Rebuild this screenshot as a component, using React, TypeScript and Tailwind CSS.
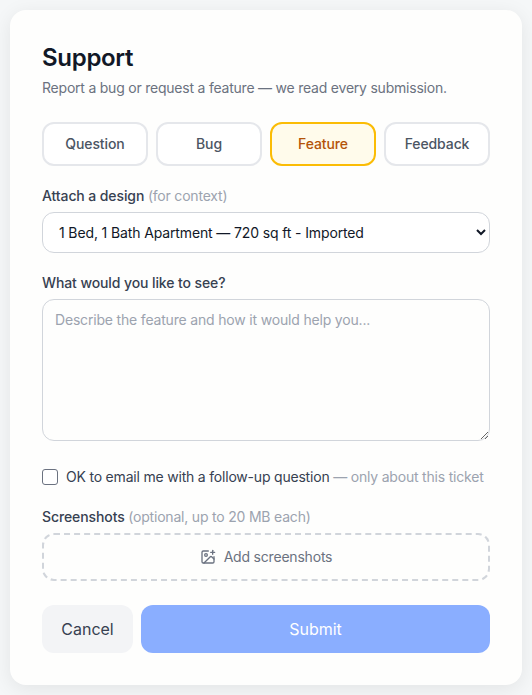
import { ImagePlus } from "lucide-react";

const tabs = ["Question", "Bug", "Feature", "Feedback"];

export default function App() {
  return (
    <div className="min-h-screen bg-[#f5f7f8] p-[10px] font-['Inter',sans-serif]">
      <div className="flex h-[675px] flex-col rounded-2xl bg-[#fefefd] px-8 pt-8 shadow-[0_4px_20px_rgba(0,0,0,0.08)]">
        <h1 className="text-2xl leading-8 font-semibold tracking-[-0.3px] text-[#111827]">Support</h1>
        <p className="mt-1 text-sm leading-5 tracking-[-0.22px] text-[#6b7280]">Report a bug or request a feature — we read every submission.</p>
        <div className="mt-[24px] grid grid-cols-4 gap-2">
          {tabs.map((t) => (
            <button
              key={t}
              className={
                t === "Feature"
                  ? "h-[44px] rounded-xl border-2 border-[#fbbc05] bg-[#fffbeb] text-sm font-medium tracking-[-0.1px] text-[#b45309]"
                  : "h-[44px] rounded-xl border-2 border-[#e5e7eb] bg-white text-sm font-medium tracking-[-0.1px] text-[#4b5563]"
              }
            >
              {t}
            </button>
          ))}
        </div>
        <label className="mt-[20px] text-sm leading-5 font-medium tracking-[-0.1px] text-[#374151]">
          Attach a design <span className="font-normal tracking-[-0.2px] text-[#9ca3af]">(for context)</span>
        </label>
        <select className="mt-[6px] h-[41px] w-full rounded-xl border border-[#d1d5db] bg-white px-3 text-sm tracking-[-0.13px] text-[#111827]">
          <option>1 Bed, 1 Bath Apartment — 720 sq ft - Imported</option>
        </select>
        <label className="mt-[20px] text-sm leading-5 font-medium tracking-[-0.1px] text-[#374151]">What would you like to see?</label>
        <textarea
          className="mt-[6px] h-[142px] w-full rounded-xl border border-[#d1d5db] bg-transparent px-3 py-[10px] text-sm leading-5 tracking-[-0.18px] text-[#111827] placeholder:text-[#9ca3af]"
          placeholder="Describe the feature and how it would help you..."
        />
        <label className="mt-[26px] flex items-center gap-2 text-sm leading-5 tracking-[-0.2px] whitespace-nowrap text-[#374151]">
          <input type="checkbox" className="m-0 h-4 w-4 shrink-0 appearance-none rounded-[3px] border border-[#6b7280] bg-white" />
          <span>
            OK to email me with a follow-up question <span className="text-[#9ca3af]">— only about this ticket</span>
          </span>
        </label>
        <label className="mt-[20px] text-sm leading-5 font-medium tracking-[-0.1px] text-[#374151]">
          Screenshots <span className="font-normal tracking-[-0.2px] text-[#9ca3af]">(optional, up to 20 MB each)</span>
        </label>
        <button className="mt-[6px] flex h-[48px] items-center justify-center gap-2 rounded-xl border-2 border-dashed border-[#d1d5db] text-sm font-normal tracking-[-0.2px] text-[#6b7280]">
          <ImagePlus size={16} />
          Add screenshots
        </button>
        <div className="mt-6 flex gap-2">
          <button className="h-12 w-[91px] rounded-xl bg-[#f3f4f6] text-base font-normal text-[#374151]">Cancel</button>
          <button className="h-12 flex-1 rounded-xl bg-[#8aaeff] text-base font-normal text-white">Submit</button>
        </div>
      </div>
    </div>
  );
}
